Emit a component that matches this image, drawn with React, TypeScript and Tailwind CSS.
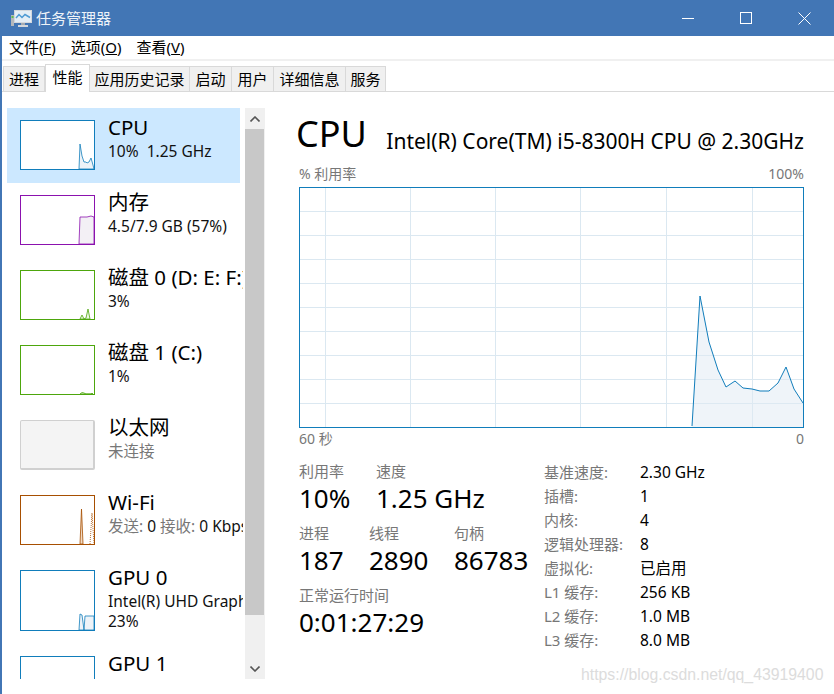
const FONT = "font-['Noto_Sans','Noto_Sans_CJK_SC',sans-serif]";

function TaskIcon() {
  return (
    <svg width="21" height="19" viewBox="0 0 21 19" className="shrink-0">
      <rect x="0" y="6" width="3" height="11" fill="#b4b8bc" />
      <rect x="0.5" y="7" width="2" height="2" fill="#5fc04a" />
      <rect x="3.5" y="1.5" width="17" height="12" fill="#e4eef6" stroke="#d4d8dc" />
      <path d="M5 9 L8 5.5 L11 8.5 L14 5.5 L19 8.5" fill="none" stroke="#4f9bd4" strokeWidth="1.5" />
      <rect x="10" y="14" width="4" height="2" fill="#a4abb2" />
      <rect x="7" y="16" width="10" height="2" fill="#d4d8dc" />
    </svg>
  );
}

function WindowButtons() {
  return (
    <div className="flex items-center">
      <div className="w-[58px] flex justify-center">
        <div className="w-3 h-px bg-white" />
      </div>
      <div className="w-[58px] flex justify-center">
        <div className="w-3 h-3 border border-white" />
      </div>
      <div className="w-[58px] flex justify-center">
        <svg width="13" height="13" viewBox="0 0 13 13">
          <path d="M0.5 0.5 L12.5 12.5 M12.5 0.5 L0.5 12.5" stroke="#fff" strokeWidth="1" />
        </svg>
      </div>
    </div>
  );
}

const tabs = [
  { label: "进程", w: "w-[42px]" },
  { label: "性能", w: "w-[45px]" },
  { label: "应用历史记录", w: "w-[100px]" },
  { label: "启动", w: "w-[42px]" },
  { label: "用户", w: "w-[42px]" },
  { label: "详细信息", w: "w-[72px]" },
  { label: "服务", w: "w-[40px]" },
];

function Tabs() {
  return (
    <div className="flex items-end h-[31px] pl-[1px] border-b border-[#d9d9d9]">
      {tabs.map((t) =>
        t.label === "性能" ? (
          <div
            key={t.label}
            className={`${t.w} h-[28px] -mb-px flex items-start justify-center bg-white border border-b-0 border-[#d9d9d9] text-[15px] leading-[24px] text-black`}
          >
            {t.label}
          </div>
        ) : (
          <div
            key={t.label}
            className={`${t.w} h-[25px] flex items-center justify-center bg-[#f0f0f0] border border-l-0 first:border-l border-b-0 border-[#d9d9d9] text-[15px] text-black`}
          >
            {t.label}
          </div>
        ),
      )}
    </div>
  );
}

type Thumb = {
  color: string;
  fill: string;
  h: string;
  path?: string;
  extra?: string;
};

function SideItem({
  title,
  sub,
  sub2,
  thumb,
  selected,
  disabled,
  height,
}: {
  title: string;
  sub?: React.ReactNode;
  sub2?: string;
  thumb: Thumb;
  selected?: boolean;
  disabled?: boolean;
  height: string;
}) {
  return (
    <div className={`${height} w-[233px] shrink-0 flex pl-[13px] pt-[12px] ${selected ? "bg-[#cce8ff]" : ""}`}>
      <div
        className={`${thumb.h} w-[75px] shrink-0 overflow-hidden ${
          disabled
            ? "rounded-[2px] border border-[#d0d0d0] border-b-2 border-r-2 bg-[#f4f4f4]"
            : "border bg-white"
        }`}
        style={disabled ? undefined : { borderColor: thumb.color }}
      >
        {thumb.path && (
          <svg viewBox="0 0 73 60" width="73" height="60" className="block" preserveAspectRatio="xMinYMin">
            <path d={thumb.path} fill={thumb.fill} stroke={thumb.color} strokeWidth="0.8" />
            {thumb.extra && (
              <path d={thumb.extra} fill="none" stroke={thumb.color} strokeWidth="0.8" strokeDasharray="1 1" />
            )}
          </svg>
        )}
      </div>
      <div className="ml-[13px] whitespace-nowrap">
        <div className="text-[20.5px] leading-[27px] -mt-[6px] text-black">{title}</div>
        {sub && <div className="text-[15.5px] leading-[20px] text-[#111] whitespace-pre">{sub}</div>}
        {sub2 && <div className="text-[15.5px] leading-[20px] text-[#111]">{sub2}</div>}
      </div>
    </div>
  );
}

function Sidebar() {
  return (
    <div className="w-[236px] h-[571px] ml-[5px] flex flex-col overflow-hidden shrink-0">
      <SideItem
        selected
        title="CPU"
        sub="10%  1.25 GHz"
        height="h-[75px]"
        thumb={{
          color: "#117dbb",
          fill: "#eef3f8",
          h: "h-[50px]",
          path: "M58 48 L59 23 L61 35 L63 41 L65 41 L66 42 L68 41 L70 37 L72 44 L73 48 Z",
        }}
      />
      <SideItem
        title="内存"
        sub="4.5/7.9 GB (57%)"
        height="h-[75px]"
        thumb={{
          color: "#8b12ae",
          fill: "#f3f0f5",
          h: "h-[50px]",
          path: "M58 48 L59 21 L66 21 L70 20 L73 21 L73 48 Z",
        }}
      />
      <SideItem
        title="磁盘 0 (D: E: F:)"
        sub="3%"
        height="h-[75px]"
        thumb={{
          color: "#4da60c",
          fill: "#eff7e8",
          h: "h-[50px]",
          path: "M59 48 L61 44 L63 48 L65 47 L67 38 L69 48 Z",
        }}
      />
      <SideItem
        title="磁盘 1 (C:)"
        sub="1%"
        height="h-[75px]"
        thumb={{
          color: "#4da60c",
          fill: "#eff7e8",
          h: "h-[50px]",
          path: "M59 48 L61 46.5 L63 47 L65 48 L70 48 L71 47 L72 48 Z",
        }}
      />
      <SideItem
        disabled
        title="以太网"
        sub={<span className="text-[#777]">未连接</span>}
        height="h-[75px]"
        thumb={{ color: "#ccc", fill: "none", h: "h-[50px]" }}
      />
      <SideItem
        title="Wi-Fi"
        sub={
          <>
            <span className="text-[#777]">发送:</span> 0 <span className="text-[#777]">接收:</span> 0 Kbps
          </>
        }
        height="h-[75px]"
        thumb={{
          color: "#a74f01",
          fill: "#f0d9c4",
          h: "h-[50px]",
          path: "M59 48 L60.5 13 L62 48 Z",
          extra: "M69 48 L71 17 L73 48",
        }}
      />
      <SideItem
        title="GPU 0"
        sub="Intel(R) UHD Graphics 630"
        sub2="23%"
        height="h-[86px]"
        thumb={{
          color: "#117dbb",
          fill: "#eef3f8",
          h: "h-[61px]",
          path: "M58 59 L59 43 L61 44 L63 59 L64 45 L73 45 L73 59 Z",
        }}
      />
      <SideItem
        title="GPU 1"
        height="h-[75px]"
        thumb={{ color: "#117dbb", fill: "none", h: "h-[61px]" }}
      />
    </div>
  );
}

function Scrollbar() {
  return (
    <div className="w-[20px] h-[571px] ml-[2px] flex flex-col bg-[#f0f0f0] shrink-0">
      <div className="h-[21px] flex items-center justify-center">
        <svg width="10" height="6" viewBox="0 0 10 6">
          <path d="M0.5 5.5 L5 1 L9.5 5.5" fill="none" stroke="#555" strokeWidth="1.6" />
        </svg>
      </div>
      <div className="h-[486px] w-[19px] bg-[#c8c8c8]" />
      <div className="flex-1 flex items-end justify-center pb-[7px]">
        <svg width="10" height="6" viewBox="0 0 10 6">
          <path d="M0.5 0.5 L5 5 L9.5 0.5" fill="none" stroke="#555" strokeWidth="1.6" />
        </svg>
      </div>
    </div>
  );
}

function Chart() {
  const hLines = [23, 47, 71, 95, 119, 143, 167, 191, 215];
  const vLines = [25, 110, 195, 280, 366, 452];
  const line = [
    [392, 238], [400, 108], [409, 154], [418, 182], [426, 199], [435, 193], [443, 200],
    [452, 201], [460, 203], [469, 203], [478, 195], [486, 179], [494, 201], [503, 215],
  ];
  const pts = line.map((p) => p.join(",")).join(" ");
  return (
    <div className="h-[241px] w-[505px] border border-[#117dbb]">
      <svg width="503" height="239" viewBox="0 0 503 239" className="block">
        {hLines.map((y) => (
          <line key={y} x1="0" x2="503" y1={y + 0.5} y2={y + 0.5} stroke="#dbe8f1" />
        ))}
        {vLines.map((x) => (
          <line key={x} y1="0" y2="239" x1={x + 0.5} x2={x + 0.5} stroke="#dbe8f1" />
        ))}
        <polygon points={`${pts} 503,239 392,239`} fill="#dfe9f3" fillOpacity="0.5" />
        <polyline points={pts} fill="none" stroke="#117dbb" strokeWidth="1" />
      </svg>
    </div>
  );
}

function Stat({ label, value, className }: { label: string; value: string; className: string }) {
  return (
    <div className={className}>
      <div className="text-[15px] leading-[19px] text-[#777]">{label}</div>
      <div className="text-[26px] leading-[34px] text-black whitespace-nowrap">{value}</div>
    </div>
  );
}

const specs = [
  ["基准速度:", "2.30 GHz"],
  ["插槽:", "1"],
  ["内核:", "4"],
  ["逻辑处理器:", "8"],
  ["虚拟化:", "已启用"],
  ["L1 缓存:", "256 KB"],
  ["L2 缓存:", "1.0 MB"],
  ["L3 缓存:", "8.0 MB"],
];

function Detail() {
  return (
    <div className="w-[505px] flex flex-col ml-[34px] shrink-0">
      <div className="h-[57px] flex items-start justify-between -ml-[3px]">
        <div className="text-[36px] leading-[52px] text-black">CPU</div>
        <div className="text-[21px] leading-[28px] mt-[19px] text-black whitespace-nowrap">
          Intel(R) Core(TM) i5-8300H CPU @ 2.30GHz
        </div>
      </div>
      <div className="flex justify-between text-[14px] leading-[18px] text-[#777] mb-[4px]">
        <span>% 利用率</span>
        <span>100%</span>
      </div>
      <Chart />
      <div className="flex justify-between text-[14px] leading-[18px] text-[#777] mt-[2px]">
        <span>60 秒</span>
        <span>0</span>
      </div>
      <div className="flex mt-[14px]">
        <div className="w-[245px] shrink-0">
          <div className="flex">
            <Stat label="利用率" value="10%" className="w-[77px]" />
            <Stat label="速度" value="1.25 GHz" className="" />
          </div>
          <div className="flex mt-[9px]">
            <Stat label="进程" value="187" className="w-[70px]" />
            <Stat label="线程" value="2890" className="w-[85px]" />
            <Stat label="句柄" value="86783" className="" />
          </div>
          <Stat label="正常运行时间" value="0:01:27:29" className="mt-[9px]" />
        </div>
        <div className="grid grid-cols-[96px_1fr] auto-rows-[24px] text-[15px] leading-[24px] -mt-[2px]">
          {specs.map(([k, v]) => (
            <div key={k} className="contents">
              <div className="text-[#777] whitespace-nowrap">{k}</div>
              <div className="text-black text-[15.5px] whitespace-nowrap">{v}</div>
            </div>
          ))}
        </div>
      </div>
    </div>
  );
}

export default function App() {
  return (
    <div className={`${FONT} relative w-[834px] h-[694px] bg-white overflow-hidden border-l-2 border-[#4276b5]`}>
      <div className="h-[36px] bg-[#4276b5] flex items-center justify-between pl-[9px] pr-[1px]">
        <div className="flex items-center gap-[4px] text-[15px] text-[#eef3f8]">
          <TaskIcon />
          <span>任务管理器</span>
        </div>
        <WindowButtons />
      </div>
      <div className="h-[25px] flex items-center gap-[15px] pl-[7px] border-b-2 border-[#f0f0f0] text-[15px] text-black">
        <span>
          文件(<u>F</u>)
        </span>
        <span>
          选项(<u>O</u>)
        </span>
        <span>
          查看(<u>V</u>)
        </span>
      </div>
      <Tabs />
      <div className="flex mt-[16px]">
        <Sidebar />
        <Scrollbar />
        <Detail />
      </div>
      <div className="absolute left-[579px] top-[665px] font-['Liberation_Sans',sans-serif] text-[15.8px] leading-[20px] text-[#dcdcdc] whitespace-nowrap">
        https://blog.csdn.net/qq_43919400
      </div>
    </div>
  );
}
